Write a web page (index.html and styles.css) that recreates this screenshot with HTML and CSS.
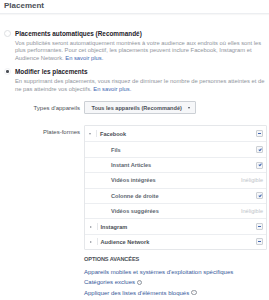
FILE: index.html
```html
<!DOCTYPE html>
<html lang="fr">
<head>
<meta charset="utf-8">
<link rel="stylesheet" href="styles.css">
</head>
<body>
<div class="header">Placement</div>

<div class="opt opt-auto">
  <div class="opt-title"><span class="radio"></span>Placements automatiques (Recommandé)</div>
  <p class="desc">Vos publicités seront automatiquement montrées à votre audience aux endroits où elles sont les<br>plus performantes. Pour cet objectif, les placements peuvent inclure Facebook, Instagram et<br>Audience Network. <a class="link">En savoir plus.</a></p>
</div>

<div class="opt opt-edit">
  <div class="opt-title"><span class="radio checked"><span class="dot"></span></span>Modifier les placements</div>
  <p class="desc">En supprimant des placements, vous risquez de diminuer le nombre de personnes atteintes et de<br>ne pas atteindre vos objectifs. <a class="link">En savoir plus.</a></p>
</div>

<div class="field field-devices">
  <div class="label">Types d'appareils</div>
  <div class="select">Tous les appareils (Recommandé)<span class="caret-down"></span></div>
</div>

<div class="field field-platforms">
  <div class="label">Plates-formes</div>
  <div class="table">
    <div class="row group">
      <span class="tri down"></span><span class="sep"></span><span class="name">Facebook</span><span class="cb minus"></span>
    </div>
    <div class="row child"><span class="name">Fils</span><span class="cb check"></span></div>
    <div class="row child"><span class="name">Instant Articles</span><span class="cb check"></span></div>
    <div class="row child"><span class="name">Vidéos intégrées</span><span class="inel">Inéligible</span></div>
    <div class="row child"><span class="name">Colonne de droite</span><span class="cb check"></span></div>
    <div class="row child"><span class="name">Vidéos suggérées</span><span class="inel">Inéligible</span></div>
    <div class="row group">
      <span class="tri right"></span><span class="sep"></span><span class="name">Instagram</span><span class="cb minus"></span>
    </div>
    <div class="row group">
      <span class="tri right"></span><span class="sep"></span><span class="name">Audience Network</span><span class="cb minus"></span>
    </div>
  </div>
</div>

<div class="advanced">
  <div class="adv-title">OPTIONS AVANCÉES</div>
  <a class="adv-link">Appareils mobiles et systèmes d'exploitation spécifiques</a>
  <a class="adv-link">Catégories exclues <span class="info">i</span></a>
  <a class="adv-link">Appliquer des listes d'éléments bloqués <span class="info">i</span></a>
</div>
</body>
</html>
```

FILE: styles.css
```css
html, body {
  margin: 0;
  padding: 0;
  background: #ffffff;
}
body {
  font-family: "Liberation Sans", Arial, Helvetica, sans-serif;
  color: #4b4f56;
  width: 269px;
  height: 300px;
  overflow: hidden;
}
.header {
  height: 13px;
  padding-left: 4px;
  font-size: 8px;
  font-weight: bold;
  line-height: 11px;
  color: #4b4f56;
  border-bottom: 1px solid #eceef1;
  box-shadow: 0 1px 1px rgba(0,0,0,0.03);
}
.opt-title {
  display: flex;
  align-items: center;
  height: 8px;
  padding-left: 4px;
  font-size: 6.4px;
  font-weight: bold;
  color: #1d2129;
  white-space: nowrap;
}
.opt-auto { margin-top: 15px; }
.opt-edit { margin-top: 5px; }
.radio {
  width: 5px;
  height: 5px;
  border: 1px solid #dddfe2;
  border-radius: 50%;
  margin-right: 4px;
  flex: none;
  background: #fff;
  display: flex;
  align-items: center;
  justify-content: center;
}
.radio.checked {
  border-color: #f0f1f3;
}
.dot {
  width: 2.6px;
  height: 2.6px;
  border-radius: 50%;
  background: #4b4f56;
}
.desc {
  margin: 3px 0 0 15px;
  font-size: 5.8px;
  line-height: 7.4px;
  color: #90949c;
  white-space: nowrap;
}
.link {
  color: #4267b2;
}
.field {
  display: grid;
  grid-template-columns: 80px 182px;
  column-gap: 4px;
  align-items: start;
}
.label {
  text-align: right;
  font-size: 6px;
  color: #4b4f56;
  white-space: nowrap;
}
.field-devices {
  margin-top: 8px;
  align-items: center;
}
.select {
  width: 103px;
  height: 11px;
  box-sizing: content-box;
  border: 1px solid #ccd0d5;
  border-radius: 1px;
  background: #f6f7f9;
  display: flex;
  align-items: center;
  padding-left: 6.5px;
  font-size: 5.6px;
  font-weight: bold;
  color: #4b4f56;
  white-space: nowrap;
}
.caret-down {
  margin-left: 6px;
  width: 0;
  height: 0;
  border-left: 1.6px solid transparent;
  border-right: 1.6px solid transparent;
  border-top: 2px solid #4b4f56;
}
.field-platforms {
  margin-top: 11px;
}
.field-platforms .label {
  line-height: 15.4px;
}
.table {
  width: 181px;
  border: 1px solid #e5e7ea;
  border-radius: 1px;
}
.row {
  display: flex;
  align-items: center;
  height: 15.4px;
  box-sizing: border-box;
  border-top: 1px solid #eceef1;
  padding-right: 3px;
  font-size: 5.6px;
  white-space: nowrap;
}
.row:first-child { border-top: 0; }
.row .name {
  flex: 1;
  font-weight: bold;
  color: #606770;
}
.row.group .name {
  color: #4b4f56;
}
.row.child {
  padding-left: 26px;
}
.tri {
  width: 0;
  height: 0;
  margin-left: 4px;
  flex: none;
}
.tri.down {
  border-left: 1.5px solid transparent;
  border-right: 1.5px solid transparent;
  border-top: 2px solid #90949c;
}
.tri.right {
  margin-left: 4.5px;
  border-top: 1.5px solid transparent;
  border-bottom: 1.5px solid transparent;
  border-left: 2px solid #90949c;
}
.sep {
  width: 1px;
  height: 7px;
  background: #e5e7ea;
  margin: 0 3px 0 5px;
  flex: none;
}
.cb {
  width: 5px;
  height: 5px;
  border: 1px solid #ccd0d5;
  border-radius: 1px;
  background: #f6f7f9;
  position: relative;
  flex: none;
}
.cb.minus::after {
  content: "";
  position: absolute;
  left: 1px;
  top: 2px;
  width: 3px;
  height: 1px;
  background: #4267b2;
}
.cb.check::after {
  content: "";
  position: absolute;
  left: 1.6px;
  top: 0.6px;
  width: 1.2px;
  height: 2.4px;
  border-right: 0.9px solid #4267b2;
  border-bottom: 0.9px solid #4267b2;
  transform: rotate(40deg);
}
.inel {
  color: #bec3c9;
  font-size: 5.6px;
}
.advanced {
  margin: 5px 0 0 84px;
  display: flex;
  flex-direction: column;
  align-items: flex-start;
}
.adv-title {
  font-size: 5.6px;
  font-weight: bold;
  color: #4b4f56;
  line-height: 8px;
  letter-spacing: -0.1px;
}
.adv-link {
  font-size: 6px;
  color: #365899;
  line-height: 10.2px;
  white-space: nowrap;
  display: flex;
  align-items: center;
}
.adv-title + .adv-link { margin-top: 4px; }
.info {
  display: inline-flex;
  align-items: center;
  justify-content: center;
  width: 3.4px;
  height: 3.4px;
  margin-left: 2px;
  border: 0.6px solid #90949c;
  border-radius: 50%;
  font-size: 3px;
  line-height: 1;
  color: #90949c;
}
```
